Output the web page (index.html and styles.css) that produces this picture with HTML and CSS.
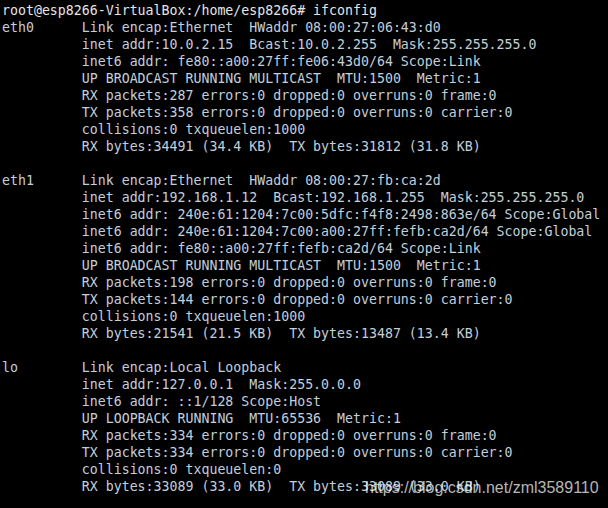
FILE: index.html
```html
<!DOCTYPE html>
<html>
<head>
<meta charset="utf-8">
<link rel="stylesheet" href="styles.css">
</head>
<body>
<div class="term">
<pre class="prompt">root@esp8266-VirtualBox:/home/esp8266# ifconfig</pre>
<pre class="out">eth0      Link encap:Ethernet  HWaddr 08:00:27:06:43:d0  
          inet addr:10.0.2.15  Bcast:10.0.2.255  Mask:255.255.255.0
          inet6 addr: fe80::a00:27ff:fe06:43d0/64 Scope:Link
          UP BROADCAST RUNNING MULTICAST  MTU:1500  Metric:1
          RX packets:287 errors:0 dropped:0 overruns:0 frame:0
          TX packets:358 errors:0 dropped:0 overruns:0 carrier:0
          collisions:0 txqueuelen:1000 
          RX bytes:34491 (34.4 KB)  TX bytes:31812 (31.8 KB)

eth1      Link encap:Ethernet  HWaddr 08:00:27:fb:ca:2d  
          inet addr:192.168.1.12  Bcast:192.168.1.255  Mask:255.255.255.0
          inet6 addr: 240e:61:1204:7c00:5dfc:f4f8:2498:863e/64 Scope:Global
          inet6 addr: 240e:61:1204:7c00:a00:27ff:fefb:ca2d/64 Scope:Global
          inet6 addr: fe80::a00:27ff:fefb:ca2d/64 Scope:Link
          UP BROADCAST RUNNING MULTICAST  MTU:1500  Metric:1
          RX packets:198 errors:0 dropped:0 overruns:0 frame:0
          TX packets:144 errors:0 dropped:0 overruns:0 carrier:0
          collisions:0 txqueuelen:1000 
          RX bytes:21541 (21.5 KB)  TX bytes:13487 (13.4 KB)

lo        Link encap:Local Loopback  
          inet addr:127.0.0.1  Mask:255.0.0.0
          inet6 addr: ::1/128 Scope:Host
          UP LOOPBACK RUNNING  MTU:65536  Metric:1
          RX packets:334 errors:0 dropped:0 overruns:0 frame:0
          TX packets:334 errors:0 dropped:0 overruns:0 carrier:0
          collisions:0 txqueuelen:0 
          RX bytes:33089 (33.0 KB)  TX bytes:33089 (33.0 KB)</pre>
<div class="watermark">https://blog.csdn.net/zml3589110</div>
</div>
</body>
</html>
```
FILE: styles.css
```css
html, body {
  margin: 0;
  padding: 0;
  background: #000;
}
.term {
  position: relative;
  width: 608px;
  height: 508px;
  overflow: hidden;
  background: #000;
  padding: 2px 0 0 2px;
  box-sizing: border-box;
}
.term pre {
  margin: 0;
  font-family: "DejaVu Sans Mono", monospace;
  font-size: 13.25px;
  line-height: 17px;
  white-space: pre;
}
.prompt {
  color: #e6e6e6;
}
.out {
  color: #c3cfdc;
}
.watermark {
  position: absolute;
  left: 365px;
  top: 478px;
  font-family: "Liberation Sans", Arial, sans-serif;
  font-size: 16px;
  line-height: 20px;
  color: rgba(255, 255, 255, 0.72);
}
```
